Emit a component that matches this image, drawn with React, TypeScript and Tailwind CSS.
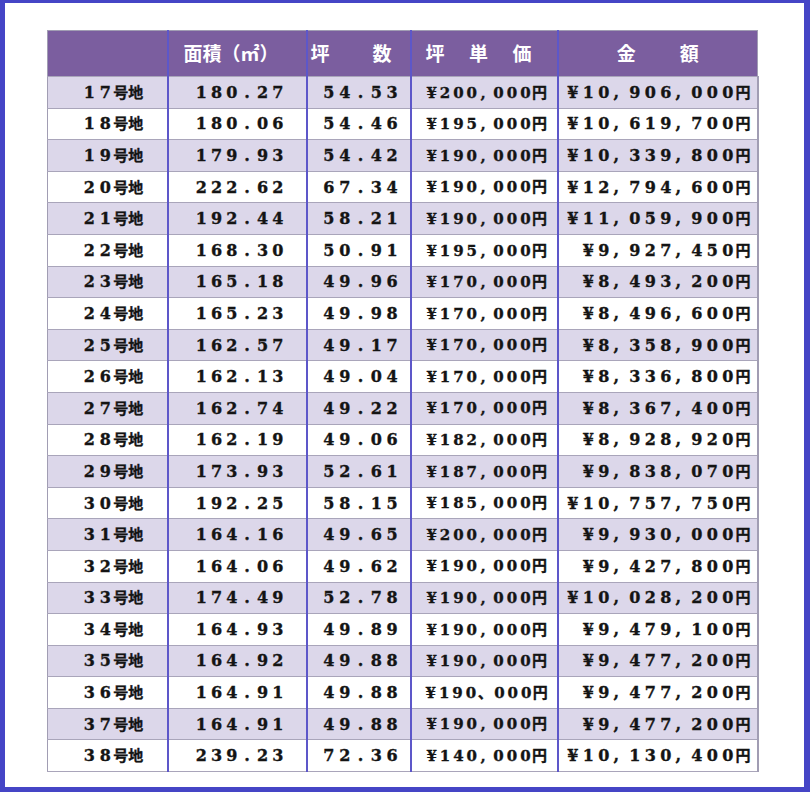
const rows: [string, string, string, string, string][] = [
  ["17", "180.27", "54.53", "200,000", "10,906,000"],
  ["18", "180.06", "54.46", "195,000", "10,619,700"],
  ["19", "179.93", "54.42", "190,000", "10,339,800"],
  ["20", "222.62", "67.34", "190,000", "12,794,600"],
  ["21", "192.44", "58.21", "190,000", "11,059,900"],
  ["22", "168.30", "50.91", "195,000", "9,927,450"],
  ["23", "165.18", "49.96", "170,000", "8,493,200"],
  ["24", "165.23", "49.98", "170,000", "8,496,600"],
  ["25", "162.57", "49.17", "170,000", "8,358,900"],
  ["26", "162.13", "49.04", "170,000", "8,336,800"],
  ["27", "162.74", "49.22", "170,000", "8,367,400"],
  ["28", "162.19", "49.06", "182,000", "8,928,920"],
  ["29", "173.93", "52.61", "187,000", "9,838,070"],
  ["30", "192.25", "58.15", "185,000", "10,757,750"],
  ["31", "164.16", "49.65", "200,000", "9,930,000"],
  ["32", "164.06", "49.62", "190,000", "9,427,800"],
  ["33", "174.49", "52.78", "190,000", "10,028,200"],
  ["34", "164.93", "49.89", "190,000", "9,479,100"],
  ["35", "164.92", "49.88", "190,000", "9,477,200"],
  ["36", "164.91", "49.88", "190、000", "9,477,200"],
  ["37", "164.91", "49.88", "190,000", "9,477,200"],
  ["38", "239.23", "72.36", "140,000", "10,130,400"],
];

const isCjk = (c: string) => /[\u3000-\u9fff]/.test(c);

// each glyph sits in its own fixed cell, like the full-width text in the original
function Chars({ text, cell }: { text: string; cell: string }) {
  return (
    <span className="inline-flex items-baseline">
      {[...text].map((c, i) =>
        isCjk(c) ? (
          <span key={i} className="text-[15px]">
            {c}
          </span>
        ) : (
          <span key={i} className={`inline-block ${c === "," ? "pl-[2px] text-left" : "text-center"} ${cell}`}>
            {c}
          </span>
        )
      )}
    </span>
  );
}

const cellBase = "h-[31.6px] border-y border-[#a9a5ba] p-0 align-middle";
const vline = "border-l-2 border-l-[#5d57c9]";

export default function App() {
  return (
    <div className="h-[792px] w-[810px] border-t-[3px] border-r-[6px] border-b-[5px] border-l-[5px] border-[#4545c6] bg-white pt-[27px] pl-[42px]">
      <table className="w-[710px] table-fixed border-collapse border border-[#a19db3] font-['DejaVu_Serif','Noto_Sans_CJK_JP',serif] font-bold text-[#141414]">
        <colgroup>
          <col className="w-[120px]" />
          <col className="w-[139px]" />
          <col className="w-[104px]" />
          <col className="w-[147px]" />
          <col className="w-[200px]" />
        </colgroup>
        <thead>
          <tr className="h-[46px] bg-[#7b5e9f] font-['Noto_Sans_CJK_JP',sans-serif] text-[19px] text-white">
            <th className="border-b border-[#a9a5ba] p-0"></th>
            <th className={`border-b border-[#a9a5ba] p-0 pl-[15px] text-left font-bold ${vline}`}>面積（㎡）</th>
            <th className={`border-b border-[#a9a5ba] p-0 font-bold ${vline}`}>
              <div className="flex justify-between pr-[18px] pl-[3px]">
                <span>坪</span>
                <span>数</span>
              </div>
            </th>
            <th className={`border-b border-[#a9a5ba] p-0 font-bold ${vline}`}>
              <div className="flex justify-between pr-[25px] pl-[14px]">
                <span>坪</span>
                <span>単</span>
                <span>価</span>
              </div>
            </th>
            <th className={`border-b border-[#a9a5ba] p-0 font-bold ${vline}`}>
              <div className="flex justify-center gap-[44px]">
                <span>金</span>
                <span>額</span>
              </div>
            </th>
          </tr>
        </thead>
        <tbody className="[-webkit-text-stroke:0.35px_#141414]">
          {rows.map(([no, area, tsubo, unit, total], i) => (
            <tr key={no} className={i % 2 === 0 ? "bg-[#dcd7ea]" : "bg-white"}>
              <td className={cellBase}>
                <div className="flex justify-center pt-[1px] pl-[10px] text-[16px]">
                  <Chars text={`${no}号地`} cell="w-[16px]" />
                </div>
              </td>
              <td className={`${cellBase} ${vline}`}>
                <div className="flex justify-center pt-[1px] pl-[5px] text-[16px]">
                  <Chars text={area} cell="w-[15.3px]" />
                </div>
              </td>
              <td className={`${cellBase} ${vline}`}>
                <div className="flex justify-center pt-[1px] pl-[4px] text-[16px]">
                  <Chars text={tsubo} cell="w-[15.8px]" />
                </div>
              </td>
              <td className={`${cellBase} ${vline}`}>
                <div className="flex justify-center pt-[1px] pl-[4px] text-[15px]">
                  <Chars text={`¥${unit}円`} cell="w-[13.4px]" />
                </div>
              </td>
              <td className={`${cellBase} ${vline} border-r-2 border-r-[#a19db3]`}>
                <div className="flex justify-end pt-[1px] pr-[6px] text-[16px]">
                  <Chars text={`¥${total}円`} cell="w-[15.5px]" />
                </div>
              </td>
            </tr>
          ))}
        </tbody>
      </table>
    </div>
  );
}
